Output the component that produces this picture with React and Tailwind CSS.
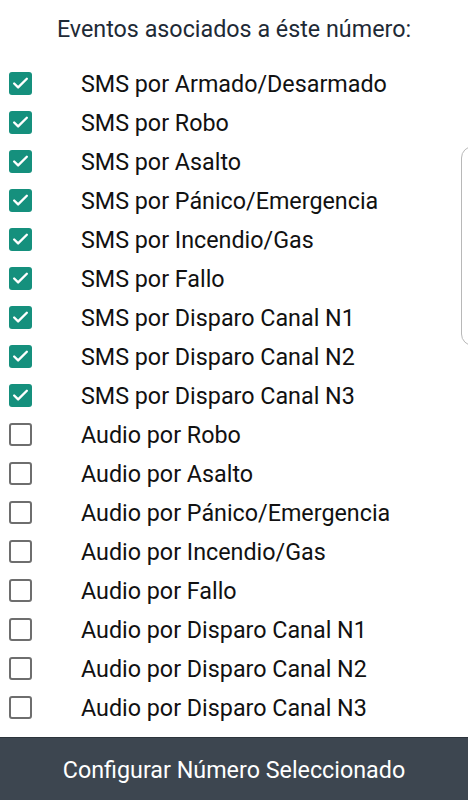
import { Check } from 'lucide-react';

const events = [
  { label: 'SMS por Armado/Desarmado', on: true },
  { label: 'SMS por Robo', on: true },
  { label: 'SMS por Asalto', on: true },
  { label: 'SMS por Pánico/Emergencia', on: true },
  { label: 'SMS por Incendio/Gas', on: true },
  { label: 'SMS por Fallo', on: true },
  { label: 'SMS por Disparo Canal N1', on: true },
  { label: 'SMS por Disparo Canal N2', on: true },
  { label: 'SMS por Disparo Canal N3', on: true },
  { label: 'Audio por Robo', on: false },
  { label: 'Audio por Asalto', on: false },
  { label: 'Audio por Pánico/Emergencia', on: false },
  { label: 'Audio por Incendio/Gas', on: false },
  { label: 'Audio por Fallo', on: false },
  { label: 'Audio por Disparo Canal N1', on: false },
  { label: 'Audio por Disparo Canal N2', on: false },
  { label: 'Audio por Disparo Canal N3', on: false },
];

function Box({ on }) {
  if (on) {
    return (
      <div className="w-[23px] h-[23px] rounded-[3px] bg-[#15907d] flex items-center justify-center">
        <Check size={19} strokeWidth={3} className="text-white" />
      </div>
    );
  }
  return <div className="w-[23px] h-[23px] rounded-[3px] border-2 border-[#6e6e6e] bg-white" />;
}

export default function App() {
  return (
    <div className="relative h-[800px] w-[468px] flex flex-col bg-white font-['Roboto',sans-serif] overflow-hidden">
      <div className="h-[64px] pt-[14px] text-center text-[23.3px] leading-[30px] text-[#1e2a36]">
        Eventos asociados a éste número:
      </div>
      <div className="flex-1 flex flex-col">
        {events.map((e) => (
          <div key={e.label} className="h-[39px] flex items-center">
            <div className="pl-[9px] w-[81px]">
              <Box on={e.on} />
            </div>
            <span className="pt-[1px] text-[23.3px] leading-[30px] text-[#111]">{e.label}</span>
          </div>
        ))}
      </div>
      <div className="h-[63px] pt-[3px] bg-[#3d4650] border-t border-[#2c343c] flex items-center justify-center text-white text-[23.3px]">
        Configurar Número Seleccionado
      </div>
      <div className="absolute left-[461px] top-[146px] w-[24px] h-[200px] rounded-[12px] border border-[#b8b8b8]" />
    </div>
  );
}
